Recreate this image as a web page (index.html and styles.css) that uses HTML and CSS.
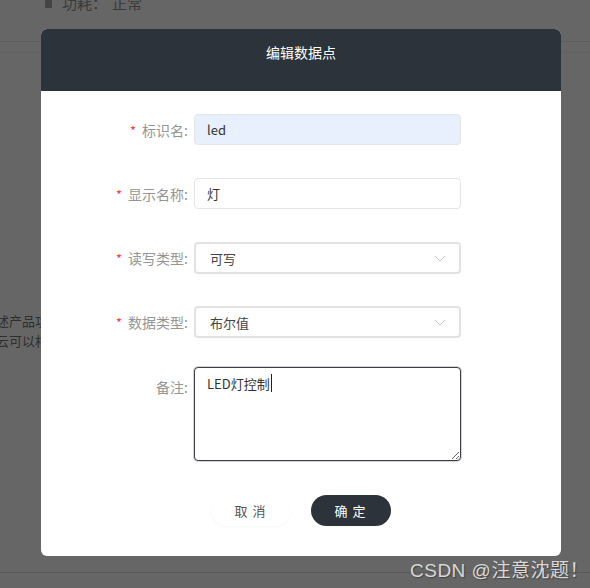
FILE: index.html
```html
<!DOCTYPE html>
<html lang="zh-CN">
<head>
    <meta charset="UTF-8">
    <meta name="viewport" content="width=device-width, initial-scale=1.0">
    <title>编辑数据点</title>
    <link rel="stylesheet" href="styles.css">
</head>
<body>
    <div class="page">
        <div class="status">
            <span class="battery"></span>
            <span class="status-key">功耗：</span>
            <span class="status-val">正常</span>
        </div>
        <div class="rule"></div>
        <div class="desc">
            <p>述产品功</p>
            <p>云可以相</p>
        </div>
    </div>

    <div class="mask">
        <div class="dialog">
            <div class="dialog-header">编辑数据点</div>
            <form class="dialog-body">
                <div class="form-row">
                    <label class="form-label"><span class="req">*</span>标识名:</label>
                    <input class="field autofill" type="text" value="led">
                </div>
                <div class="form-row">
                    <label class="form-label"><span class="req">*</span>显示名称:</label>
                    <input class="field" type="text" value="灯">
                </div>
                <div class="form-row">
                    <label class="form-label"><span class="req">*</span>读写类型:</label>
                    <div class="select">
                        <span>可写</span>
                        <svg class="arrow" width="12" height="7" viewBox="0 0 12 7"><path d="M1 1l5 5 5-5" fill="none" stroke="#c0c4cc" stroke-width="1"/></svg>
                    </div>
                </div>
                <div class="form-row">
                    <label class="form-label"><span class="req">*</span>数据类型:</label>
                    <div class="select">
                        <span>布尔值</span>
                        <svg class="arrow" width="12" height="7" viewBox="0 0 12 7"><path d="M1 1l5 5 5-5" fill="none" stroke="#c0c4cc" stroke-width="1"/></svg>
                    </div>
                </div>
                <div class="form-row textarea-row">
                    <label class="form-label">备注:</label>
                    <div class="note-box">
                        <textarea class="field note">LED灯控制</textarea>
                        <span class="caret"></span>
                    </div>
                </div>
                <div class="actions">
                    <button type="button" class="btn btn-cancel">取 消</button>
                    <button type="button" class="btn btn-ok">确 定</button>
                </div>
            </form>
        </div>
    </div>

    <div class="watermark">CSDN @注意沈题！</div>
</body>
</html>
```

FILE: styles.css
```css
* {
    box-sizing: border-box;
}

body {
    margin: 0;
    width: 590px;
    height: 588px;
    overflow: hidden;
    background-color: #666;
    font-family: "Noto Sans CJK SC", "Noto Sans", sans-serif;
    position: relative;
}

/* page behind the mask */
.page {
    height: 579px;
    border-bottom: 1px solid #5a5a5a;
}

.status {
    display: flex;
    align-items: center;
    height: 16px;
    margin-top: -6px;
    padding-left: 45px;
    font-size: 15px;
    color: #3a3a3a;
}

.battery {
    width: 7px;
    height: 12px;
    background-color: #444;
    margin-right: 10px;
}

.status-val {
    margin-left: 5px;
}

.rule {
    margin-top: 31px;
    height: 12px;
    border-top: 1px solid #5e5e5e;
    border-bottom: 1px solid #626262;
}

.desc {
    margin-top: 258px;
    margin-left: -4px;
    font-size: 13px;
    color: #2e2e2e;
}

.desc p {
    margin: 0;
    line-height: 20px;
}

/* dialog */
.mask {
    position: absolute;
    top: 0;
    left: 0;
    width: 590px;
    height: 588px;
}

.dialog {
    position: absolute;
    top: 29px;
    left: 41px;
    width: 520px;
    height: 527px;
    background-color: #fff;
    border-radius: 6px;
    overflow: hidden;
}

.dialog-header {
    height: 62px;
    background-color: #2c333b;
    color: #fff;
    font-size: 14px;
    text-align: center;
    line-height: 46px;
}

.dialog-body {
    padding-top: 23px;
}

.form-row {
    display: flex;
    align-items: center;
    margin-bottom: 33px;
}

.form-label {
    width: 153px;
    padding-right: 6px;
    text-align: right;
    font-size: 14px;
    color: #959595;
}

.req {
    color: #f23c3c;
    font-size: 13px;
    margin-right: 6px;
}

.field {
    width: 267px;
    height: 31px;
    padding: 0 12px;
    border: 1px solid #e3e5ea;
    border-radius: 4px;
    font-family: inherit;
    font-size: 13px;
    color: #333;
    outline: none;
    background-color: #fff;
}

.autofill {
    background-color: #e8f0fe;
}

.select {
    display: flex;
    justify-content: space-between;
    align-items: center;
    width: 267px;
    height: 32px;
    padding: 0 13px 0 14px;
    border: 2px solid #e2e2e2;
    border-radius: 4px;
    font-size: 13px;
    color: #444;
}

.form-row:nth-child(4) {
    margin-top: -1px;
}

.textarea-row {
    align-items: flex-start;
    margin-top: -4px;
    margin-bottom: 34px;
}

.textarea-row .form-label {
    padding-top: 10px;
}

.note-box {
    position: relative;
}

.note {
    display: block;
    height: 94px;
    padding: 6px 12px;
    line-height: 20px;
    border: 1px solid #3a3f45;
    box-shadow: 0 0 0 1px #d4d4d4;
    resize: vertical;
}

.caret {
    position: absolute;
    left: 77px;
    top: 7px;
    width: 1px;
    height: 18px;
    background-color: #222;
}

.actions {
    display: flex;
    justify-content: center;
    gap: 21px;
}

.btn {
    height: 31px;
    border: none;
    border-radius: 16px;
    font-family: inherit;
    font-size: 13px;
    letter-spacing: 1px;
    cursor: pointer;
}

.btn-cancel {
    width: 78px;
    background-color: #fff;
    color: #555;
    box-shadow: 0 1px 3px rgba(0, 0, 0, 0.04);
}

.btn-ok {
    width: 80px;
    background-color: #2c333b;
    color: #fff;
}

.watermark {
    position: absolute;
    left: 410px;
    top: 555px;
    font-family: "Liberation Sans", "Noto Sans CJK SC", sans-serif;
    font-size: 19px;
    letter-spacing: 0.5px;
    color: #d8d8d8;
    text-shadow: 1px 1px 1px #444;
    white-space: nowrap;
}
```
